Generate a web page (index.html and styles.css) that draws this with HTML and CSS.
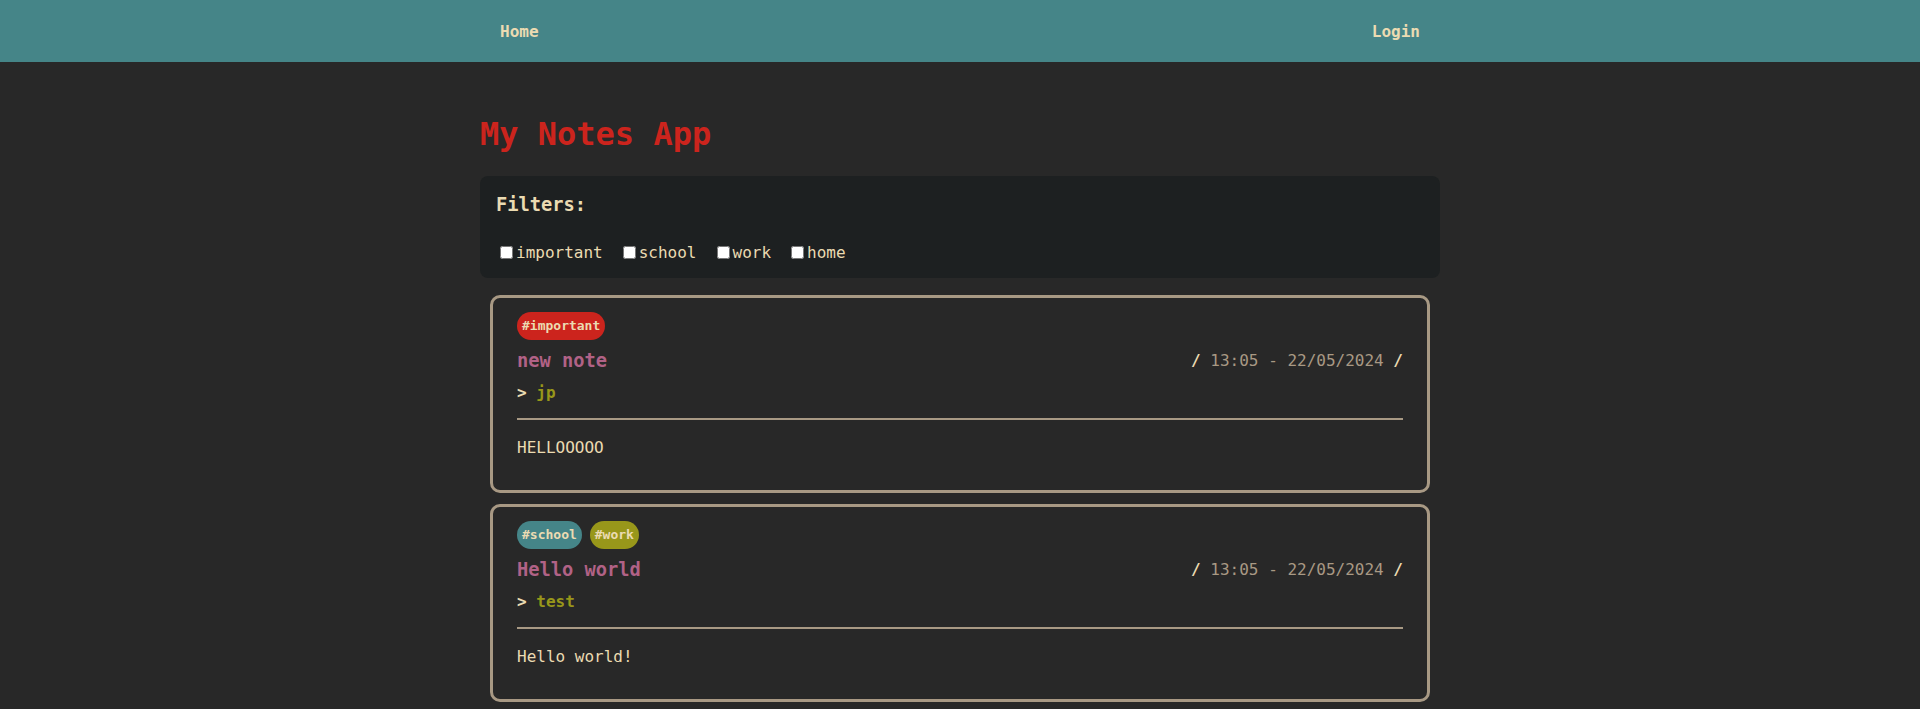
FILE: index.html
```html
<!DOCTYPE html>
<html lang="en">
<head>
<meta charset="utf-8">
<title>My Notes App</title>
<link rel="stylesheet" href="styles.css">
</head>
<body>
<nav class="navbar">
  <div class="nav-inner">
    <a class="nav-link" href="#">Home</a>
    <a class="nav-link" href="#">Login</a>
  </div>
</nav>
<main class="container">
  <h1 class="app-title">My Notes App</h1>
  <section class="filters">
    <h3 class="filters-title">Filters:</h3>
    <div class="filter-row">
      <label class="filter-opt"><input type="checkbox">important</label>
      <label class="filter-opt"><input type="checkbox">school</label>
      <label class="filter-opt"><input type="checkbox">work</label>
      <label class="filter-opt"><input type="checkbox">home</label>
    </div>
  </section>
  <section class="notes">
    <article class="note">
      <div class="tags">
        <span class="tag tag-important">#important</span>
      </div>
      <div class="note-head">
        <h3 class="note-title">new note</h3>
        <span class="note-date"><b class="slash">/</b> 13:05 - 22/05/2024 <b class="slash">/</b></span>
      </div>
      <p class="note-author"><span class="arrow">&gt;</span> <span class="author">jp</span></p>
      <hr class="divider">
      <p class="note-body">HELLOOOOO</p>
    </article>
    <article class="note">
      <div class="tags">
        <span class="tag tag-school">#school</span>
        <span class="tag tag-work">#work</span>
      </div>
      <div class="note-head">
        <h3 class="note-title">Hello world</h3>
        <span class="note-date"><b class="slash">/</b> 13:05 - 22/05/2024 <b class="slash">/</b></span>
      </div>
      <p class="note-author"><span class="arrow">&gt;</span> <span class="author">test</span></p>
      <hr class="divider">
      <p class="note-body">Hello world!</p>
    </article>
  </section>
</main>
</body>
</html>
```

FILE: styles.css
```css
* { box-sizing: border-box; }

body {
  margin: 0;
  background: #282828;
  color: #ebdbb2;
  font-family: "DejaVu Sans Mono", monospace;
  font-size: 16px;
}

.navbar {
  background: #458588;
  height: 62px;
}

.nav-inner {
  width: 960px;
  height: 100%;
  margin: 0 auto;
  padding: 0 20px;
  display: flex;
  justify-content: space-between;
  align-items: center;
}

.nav-link {
  color: #ebdbb2;
  font-weight: bold;
  text-decoration: none;
}

.container {
  width: 960px;
  margin: 0 auto;
}

.app-title {
  color: #cc241d;
  font-size: 32px;
  font-weight: bold;
  margin: 53px 0 22.5px;
}

.filters {
  background: #1d2021;
  border-radius: 8px;
  padding: 18px 16px 16px;
}

.filters-title {
  font-size: 18.72px;
  margin: 0 0 28.5px;
}

.filter-row {
  display: flex;
  gap: 16px;
}

.filter-opt {
  display: inline-flex;
  align-items: center;
}

.filter-opt input {
  width: 13px;
  height: 13px;
  margin: 3px 3px 3px 4px;
}

.notes {
  margin-top: 17px;
  display: flex;
  flex-direction: column;
  gap: 11px;
}

.note {
  margin: 0 10px;
  border: 3px solid #a89984;
  border-radius: 10px;
  padding: 14px 24px 33px;
}

.tags {
  display: flex;
  gap: 8px;
}

.tag {
  display: inline-block;
  font-size: 13px;
  font-weight: bold;
  line-height: 16px;
  padding: 6px 5px;
  border-radius: 14px;
  color: #ebdbb2;
}

.tag-important { background: #cc241d; }
.tag-school { background: #458588; }
.tag-work { background: #98971a; }

.note-head {
  display: flex;
  justify-content: space-between;
  align-items: center;
  margin-top: 10px;
}

.note-title {
  margin: 0;
  font-size: 18.72px;
  color: #b16286;
}

.note-date {
  color: #a89984;
}

.slash {
  color: #ebdbb2;
}

.note-author {
  margin: 12px 0 0;
  font-weight: bold;
}

.arrow { color: #ebdbb2; }
.author { color: #98971a; }

.divider {
  margin: 16px 0 0;
  border: 0;
  border-top: 2px solid #a89984;
  height: 0;
}

.note-body {
  margin: 18px 0 0;
}
```
